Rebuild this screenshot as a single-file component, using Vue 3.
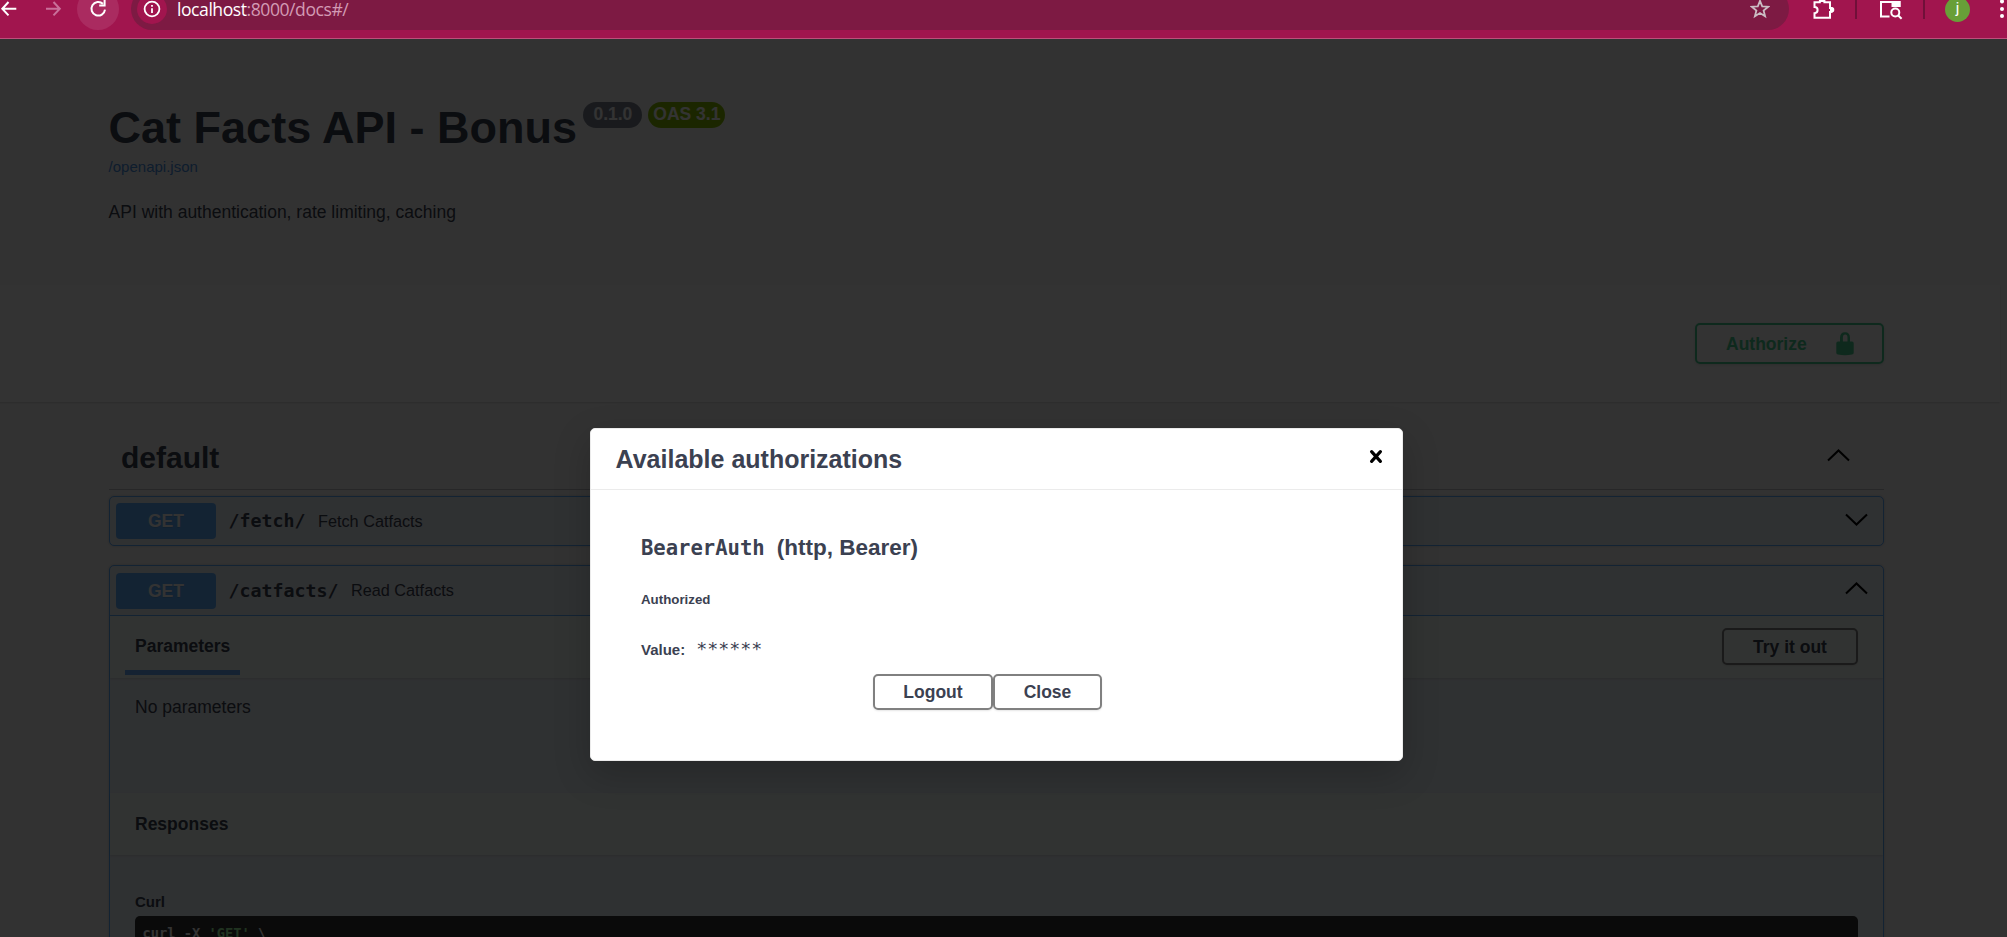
<script setup>
const badges = [
  { text: '0.1.0', kind: 'version' },
  { text: 'OAS 3.1', kind: 'oas' },
]
const chevronUp = 'M1 11.5 L11.5 1.5 L22 11.5'
const chevronDown = 'M1 1.5 L11.5 11.5 L22 1.5'
</script>

<template>
  <div class="window">
    <header class="chrome">
      <div class="chrome-row">
        <svg class="back" width="18" height="18" viewBox="0 0 18 18"><path d="M8.5 2 L2.3 8.7 L8.5 15.4 M2.3 8.7 H16.3" /></svg>
        <svg class="forward" width="18" height="18" viewBox="0 0 18 18"><path d="M8.5 2 L14.8 8.7 L8.5 15.4 M14.8 8.7 H1" /></svg>
        <div class="reload">
          <svg width="20" height="20" viewBox="0 0 20 20"><path d="M14.9 4.8 A6.8 6.8 0 1 0 17 10.6 M16.6 1 V6.4 H11.2" /></svg>
        </div>
        <div class="address">
          <div class="info">
            <svg width="18" height="18" viewBox="0 0 18 18"><circle cx="9" cy="9" r="7.4" /><path d="M9 8.3 V13 M9 5 V6.7" /></svg>
          </div>
          <div class="url"><span>localhost</span>:8000/docs#/</div>
          <svg class="star" width="20" height="20" viewBox="0 0 20 20"><path d="M10 1.8 L12.2 7.3 L18.2 7.7 L13.6 11.5 L15.1 17.3 L10 14.1 L4.9 17.3 L6.4 11.5 L1.8 7.7 L7.8 7.3 Z" /></svg>
        </div>
        <svg class="puzzle" width="24" height="24" viewBox="0 0 24 24"><path d="M2.5 5.3 H7.8 V4.5 A2.3 2.3 0 0 1 12.4 4.5 V5.3 H18 V11 H18.6 A2 2 0 0 1 18.6 15 H18 V20.7 H2.5 V16.2 A3 3 0 0 0 2.5 10 Z" /><path class="solid" d="M7.2 2 h6 v3 h-6 Z M18 10 h1.6 a2.4 2.4 0 0 1 0 5.4 h-1.6 Z" /></svg>
        <i class="divider first"></i>
        <svg class="panel" width="24" height="24" viewBox="0 0 24 24"><path d="M10.5 19.5 H2 V5 H20.5 V10" /><path class="solid" d="M12.5 4 h9 v6 h-9 Z" /><circle cx="16.3" cy="15.5" r="4" /><path d="M19 18.2 L22.6 21.8" /></svg>
        <i class="divider second"></i>
        <div class="avatar">j</div>
        <svg class="dots" width="6" height="22" viewBox="0 0 6 22"><circle cx="3" cy="3.4" r="2" /><circle cx="3" cy="11" r="2" /><circle cx="3" cy="18" r="2" /></svg>
      </div>
    </header>

    <main class="page">
      <section class="info-block">
        <div class="title-row">
          <h1>Cat Facts API - Bonus</h1>
          <span v-for="b in badges" :key="b.kind" class="badge" :class="b.kind">{{ b.text }}</span>
        </div>
        <a class="spec">/openapi.json</a>
        <p class="description">API with authentication, rate limiting, caching</p>
      </section>

      <section class="scheme">
        <button class="btn authorize">
          <span>Authorize</span>
          <svg width="18" height="24" viewBox="0 0 18 24"><path d="M4 9.5 V5.8 Q4 .2 9 .2 T14 5.8 V9.5 H16 Q17.7 9.5 17.7 11.2 V20.8 Q17.7 22.3 16 22.6 Q9 23.8 2 22.6 Q.3 22.3 .3 20.8 V11.2 Q.3 9.5 2 9.5 Z M6.9 9.5 H11.5 V5.8 Q11.5 2.6 9.2 2.6 T6.9 5.8 Z" fill-rule="evenodd" /></svg>
        </button>
      </section>

      <section class="operations">
        <div class="tag">
          <h2>default</h2>
          <svg class="chevron" width="23" height="13" viewBox="0 0 23 13"><path :d="chevronUp" /></svg>
        </div>

        <article class="opblock">
          <div class="summary">
            <b class="method">GET</b><code>/fetch/</code><span class="text">Fetch Catfacts</span>
            <svg class="chevron" width="23" height="13" viewBox="0 0 23 13"><path :d="chevronDown" /></svg>
          </div>
        </article>

        <article class="opblock open">
          <div class="summary">
            <b class="method">GET</b><code>/catfacts/</code><span class="text">Read Catfacts</span>
            <svg class="chevron" width="23" height="13" viewBox="0 0 23 13"><path :d="chevronUp" /></svg>
          </div>
          <div class="section-head">
            <h4 class="tab">Parameters</h4>
            <button class="btn try">Try it out</button>
          </div>
          <p class="empty">No parameters</p>
          <div class="section-head"><h4>Responses</h4></div>
          <div class="responses">
            <h5>Curl</h5>
            <pre>curl -X <em>'GET'</em> \</pre>
          </div>
        </article>
      </section>
    </main>

    <div class="backdrop"></div>

    <div class="modal">
      <div class="modal-head">
        <h3>Available authorizations</h3>
        <svg width="14" height="15" viewBox="0 0 14 15"><path d="M2.6 2.7 L11.4 12.3 M11.4 2.7 L2.6 12.3" /></svg>
      </div>
      <div class="modal-body">
        <h4 class="scheme-name"><code>BearerAuth</code><span>(http, Bearer)</span></h4>
        <h6>Authorized</h6>
        <div class="value"><label>Value:</label><code>******</code></div>
        <div class="actions">
          <button class="btn logout">Logout</button>
          <button class="btn close">Close</button>
        </div>
      </div>
    </div>
  </div>
</template>

<style>
html, body { margin: 0; overflow: hidden; background: #323232; }
</style>

<style scoped>
* { box-sizing: border-box; }
h1, h2, h3, h4, h5, h6, p, pre { margin: 0; }
.window {
  position: relative;
  width: 2007px;
  height: 937px;
  overflow: hidden;
  font-family: "Liberation Sans", Arial, sans-serif;
  color: #3b4151;
}
code, pre { font-family: "DejaVu Sans Mono", monospace; }

/* browser toolbar */
.chrome { height: 39px; background: #a1154e; border-bottom: 1px solid #bd4f7b; overflow: hidden; }
.chrome-row { display: flex; align-items: center; height: 42px; margin-top: -12px; }
.chrome svg { flex: none; fill: none; stroke: #fff; stroke-width: 2; }
.chrome .forward { margin-left: 27px; stroke: #c9709a; }
.reload {
  display: flex; align-items: center; justify-content: center; flex: none;
  width: 42px; height: 42px; margin-left: 14px; border-radius: 50%; background: #aa2b60;
}
.address {
  display: flex; align-items: center; flex: none;
  width: 1658px; height: 42px; margin-left: 12px; padding-left: 6px;
  border-radius: 21px; background: #7d1a43;
}
.info {
  display: flex; align-items: center; justify-content: center;
  width: 30px; height: 30px; border-radius: 50%; background: #a1154e;
}
.info svg { stroke-width: 1.8; }
.url {
  margin-left: 10px; font: 17.6px/24px "Open Sans", "Noto Sans", sans-serif;
  letter-spacing: -0.46px; color: #d39ab4; white-space: nowrap;
}
.url span { color: #fff; }
.chrome .star { margin-left: auto; margin-right: 19px; stroke: #cbbcc3; stroke-width: 1.8; }
.chrome .puzzle { margin: 0 0 0 23px; }
.chrome .solid { fill: #fff; stroke: none; }
.divider { flex: none; width: 2px; height: 20px; margin-top: -1px; background: #701039; }
.first { margin-left: 19px; }
.chrome .panel { margin: 0 0 0 22px; }
.second { margin-left: 20px; }
.avatar {
  flex: none; width: 25px; height: 25px; margin-left: 20px; border-radius: 50%;
  background: #689f38; color: #fff; text-align: center; font: 15px/23px Roboto, sans-serif;
}
.chrome .dots { margin-left: 29px; fill: #fff; stroke: none; }

/* page */
.page { width: 2015px; height: 898px; margin-left: -8px; background: #fafafa; overflow: hidden; }
.info-block { height: 246px; padding: 63px 0 0 116.6px; }
.title-row { display: flex; align-items: flex-start; height: 52px; }
h1 { font-size: 45px; line-height: 52px; margin-right: 6.4px; white-space: nowrap; }
.badge {
  height: 26px; margin-right: 6px; border-radius: 13px;
  color: #fff; font-size: 17.5px; font-weight: 700; line-height: 25px; text-align: center;
}
.version { width: 59px; background: #7d8492; }
.oas { width: 77px; background: #89bf04; }
.spec { display: block; margin-top: 4px; font-size: 15px; line-height: 18px; color: #4990e2; }
.description { margin-top: 23px; font-size: 17.5px; line-height: 26px; }
.scheme {
  display: flex; justify-content: flex-end; align-items: center;
  width: 2008px; height: 117px; padding-right: 116px;
  background: #fcfcfc; box-shadow: 0 1px 2px rgba(0, 0, 0, .15);
}
.btn {
  padding: 0; border: 2px solid gray; border-radius: 5px; background: transparent;
  box-shadow: 0 1px 2px rgba(0, 0, 0, .1);
  color: #3b4151; font: 700 17.5px/20px "Liberation Sans", Arial, sans-serif;
}
.authorize {
  display: flex; align-items: center; justify-content: space-between;
  width: 189px; height: 41px; padding: 0 28px 0 29px; border-color: #49cc90; color: #49cc90;
}
.authorize svg { fill: #49cc90; }

.operations { width: 1775px; margin: 24px 0 0 117px; }
.tag {
  display: flex; align-items: center; justify-content: space-between;
  height: 64px; padding: 0 34px 0 12px; border-bottom: 1px solid rgba(59, 65, 81, .3);
}
h2 { font-size: 30px; line-height: 36px; }
.chevron { flex: none; margin-left: auto; margin-top: -4px; fill: none; stroke: #000; stroke-width: 2; }
.opblock {
  height: 50px; margin: 6px 0 19px; border: 1px solid #61affe; border-radius: 5px;
  background: #ebf2f8; box-shadow: 0 0 3px rgba(0, 0, 0, .19);
}
.opblock.open { height: 420px; margin: 0; }
.summary { display: flex; align-items: center; height: 48px; padding: 0 15px 0 6px; }
.open .summary { height: 50px; border-bottom: 1px solid #61affe; }
.method {
  width: 100px; height: 36px; border-radius: 4px; background: #61affe; color: #fff;
  font-size: 17.5px; line-height: 36px; text-align: center; text-shadow: 0 1px 0 rgba(0, 0, 0, .1);
}
.summary code { margin-left: 12.5px; font-size: 18.27px; font-weight: 700; line-height: 24px; }
.summary .text { margin-left: 12.5px; font-size: 16.25px; }
.section-head {
  display: flex; align-items: center; justify-content: space-between;
  height: 62px; padding: 0 25px; background: #f6fff9; box-shadow: 0 1px 2px rgba(0, 0, 0, .1);
}
h4 { font-size: 17.5px; line-height: 20px; }
.section-head .tab {
  align-self: flex-end; height: 43px; margin: 0 0 3px -10px; padding: 4px 10px 0;
  width: 115px; border-bottom: 5px solid #6aa8fa;
}
.try { width: 136px; height: 37px; margin-top: -1px; }
.empty { height: 115px; padding: 19px 25px 0; font-size: 17.5px; line-height: 21px; }
.responses { padding: 38px 25px 0; }
h5 { font-size: 15px; line-height: 18px; }
pre {
  height: 60px; margin-top: 5px; padding: 8px 7.5px; border-radius: 5px; background: #333;
  color: #fff; font-size: 13.7px; font-weight: 700; line-height: 18px;
}
pre em { font-style: normal; color: #a2fca2; }

/* authorization dialog */
.backdrop { position: absolute; inset: 39px 0 0 0; background: rgba(0, 0, 0, .8); }
.modal {
  position: absolute; top: 428px; left: 590px; width: 813px; height: 333px;
  border: 1px solid #ebebeb; border-radius: 5px; background: #fff;
  box-shadow: 0 12.5px 37.5px rgba(0, 0, 0, .2);
}
.modal-head {
  display: flex; align-items: center; justify-content: space-between;
  height: 61px; padding: 0 19px 0 24.6px; border-bottom: 1px solid #ebebeb;
}
.modal-head svg { margin-top: -5px; fill: none; stroke: #000; stroke-width: 3.2; stroke-linecap: round; }
h3 { font-size: 25px; line-height: 30px; margin-top: -1px; }
.modal-body { padding: 44px 50px 0; }
.scheme-name { display: flex; align-items: baseline; font-size: 22.5px; line-height: 28px; }
.scheme-name code { margin-right: 12px; font-size: 20.55px; }
h6 { margin-top: 29px; font-size: 13.3px; line-height: 18px; }
.value { display: flex; align-items: flex-start; height: 20px; margin-top: 31px; }
.value label { font-size: 15px; font-weight: 700; line-height: 20px; }
.value code { margin: -1px 0 0 11px; font-size: 18.27px; line-height: 20px; }
.actions { display: flex; gap: 0; margin: 14px 0 0 232px; }
.logout { width: 120px; height: 36px; }
.close { width: 109px; height: 36px; }
</style>
